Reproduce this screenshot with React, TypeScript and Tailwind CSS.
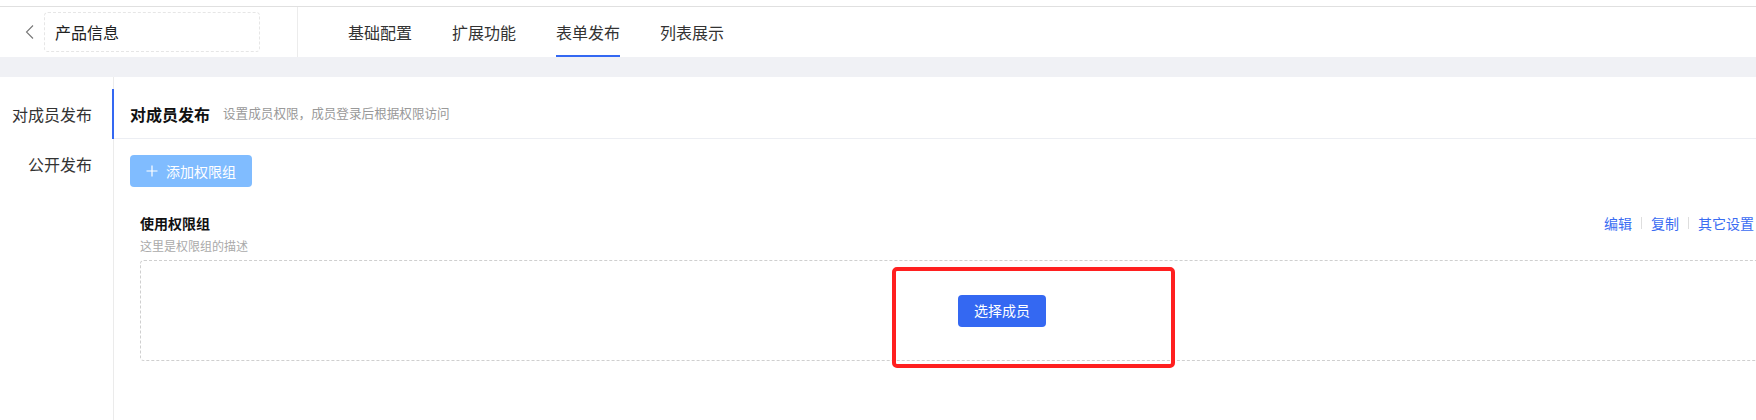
import React from 'react';

const tabs = ['基础配置', '扩展功能', '表单发布', '列表展示'];
const sideItems = ['对成员发布', '公开发布'];

const App: React.FC = () => {
    const activeTab = '表单发布';
    const activeSide = '对成员发布';

    return (
        <div
            className="w-[1756px] h-[420px] overflow-hidden bg-white flex flex-col text-[#333]"
            style={{ fontFamily: '"Noto Sans CJK SC", "Noto Sans", sans-serif' }}
        >
            {/* Top bar */}
            <div className="h-[6px] shrink-0" />
            <div className="h-[51px] shrink-0 border-t border-[#e0e0e0] flex">
                <div className="w-[298px] shrink-0 flex items-center border-r border-[#ececec]">
                    <button className="ml-[25px] w-[10px] flex items-center justify-center text-[#777]">
                        <svg width="10" height="16" viewBox="0 0 10 16" fill="none">
                            <polyline points="8,1.5 1.5,8 8,14.5" stroke="currentColor" strokeWidth="1.1" />
                        </svg>
                    </button>
                    <div className="ml-[9px] w-[216px] h-[40px] border border-dashed border-[#e6e6e6] rounded-[4px] flex items-center pl-[10px] text-[16px] text-[#222]">
                        产品信息
                    </div>
                </div>
                <div className="flex pl-[50px] gap-[40px]">
                    {tabs.map((t) => (
                        <div
                            key={t}
                            className={`h-full flex items-center text-[16px] border-b-2 pt-[2px] ${t === activeTab ? 'border-[#3468f2] text-[#333]' : 'border-transparent text-[#333]'}`}
                        >
                            {t}
                        </div>
                    ))}
                </div>
            </div>
            <div className="h-[20px] shrink-0 bg-[#f0f1f5]" />

            {/* Body */}
            <div className="flex-1 flex">
                <div className="w-[114px] shrink-0 border-r border-[#ebebeb] pt-[12px]">
                    {sideItems.map((s) => (
                        <div
                            key={s}
                            className={`-mr-px h-[50px] flex items-center justify-end pr-[20px] text-[16px] border-r-2 ${s === activeSide ? 'border-[#3468f2]' : 'border-transparent'}`}
                        >
                            {s}
                        </div>
                    ))}
                </div>

                <div className="flex-1 min-w-0 pt-[12px]">
                    <div className="h-[50px] border-b border-[#eceef3] flex items-center pl-[16px] gap-[13px]">
                        <span className="text-[16px] font-bold text-[#111]">对成员发布</span>
                        <span className="text-[12.6px] text-[#999]">设置成员权限，成员登录后根据权限访问</span>
                    </div>

                    <div className="pl-[16px]">
                        <button className="mt-[16px] h-[32px] w-[122px] rounded-[4px] bg-[#80bcff] text-white text-[14px] flex items-center pl-[16px] gap-[8px]">
                            <svg width="12" height="12" viewBox="0 0 12 12" fill="none">
                                <path d="M6 0.5v11M0.5 6h11" stroke="white" strokeWidth="1.2" />
                            </svg>
                            添加权限组
                        </button>

                        <div className="mt-[26px] ml-[10px] w-[1724px]">
                            <div className="w-[1614px] flex items-center justify-between h-[20px]">
                                <span className="text-[14px] font-bold text-[#111]">使用权限组</span>
                                <div className="flex items-center text-[14px] text-[#3a6cf2]">
                                    <span>编辑</span>
                                    <span className="mx-[9px] w-px h-[12px] bg-[#dedede]" />
                                    <span>复制</span>
                                    <span className="mx-[9px] w-px h-[12px] bg-[#dedede]" />
                                    <span>其它设置</span>
                                </div>
                            </div>
                            <div className="mt-[5px] text-[12px] leading-[16px] text-[#aaa]">这里是权限组的描述</div>
                            <div className="relative mt-[6px] h-[101px] border border-dashed border-[#cfcfcf] rounded-[4px] flex items-center justify-center">
                                <button className="h-[32px] w-[88px] rounded-[4px] bg-[#3468f2] text-white text-[14px]">
                                    选择成员
                                </button>
                                <div className="absolute left-[751px] top-[6px] w-[283px] h-[101px] border-[4px] border-[#ff2020] rounded-[5px]" />
                            </div>
                        </div>
                    </div>
                </div>
            </div>
        </div>
    );
};

export default App;
